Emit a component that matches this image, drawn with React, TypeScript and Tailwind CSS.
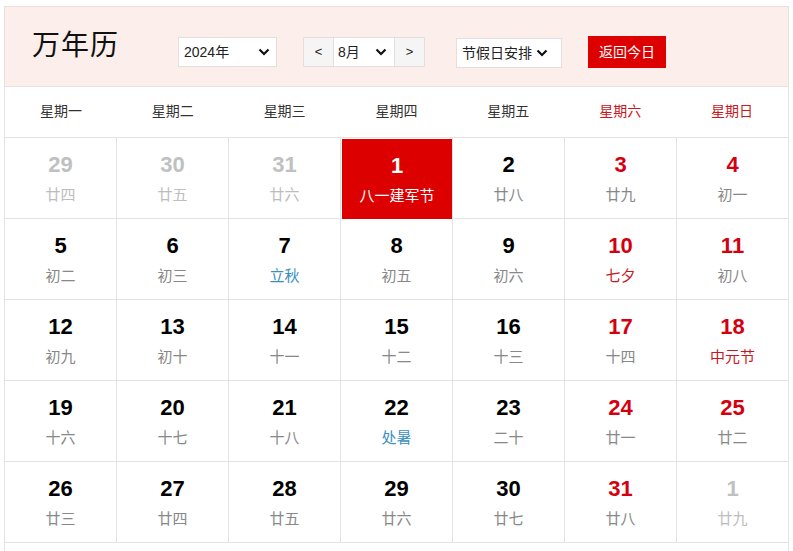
import React from 'react';

type Day = {
  n: number;
  lunar: string;
  muted?: boolean;
  weekend?: boolean;
  today?: boolean;
  term?: boolean;
  fest?: boolean;
};

const weekdays = ['星期一', '星期二', '星期三', '星期四', '星期五', '星期六', '星期日'];

const days: Day[] = [
  { n: 29, lunar: '廿四', muted: true },
  { n: 30, lunar: '廿五', muted: true },
  { n: 31, lunar: '廿六', muted: true },
  { n: 1, lunar: '八一建军节', today: true },
  { n: 2, lunar: '廿八' },
  { n: 3, lunar: '廿九', weekend: true },
  { n: 4, lunar: '初一', weekend: true },
  { n: 5, lunar: '初二' },
  { n: 6, lunar: '初三' },
  { n: 7, lunar: '立秋', term: true },
  { n: 8, lunar: '初五' },
  { n: 9, lunar: '初六' },
  { n: 10, lunar: '七夕', weekend: true, fest: true },
  { n: 11, lunar: '初八', weekend: true },
  { n: 12, lunar: '初九' },
  { n: 13, lunar: '初十' },
  { n: 14, lunar: '十一' },
  { n: 15, lunar: '十二' },
  { n: 16, lunar: '十三' },
  { n: 17, lunar: '十四', weekend: true },
  { n: 18, lunar: '中元节', weekend: true, fest: true },
  { n: 19, lunar: '十六' },
  { n: 20, lunar: '十七' },
  { n: 21, lunar: '十八' },
  { n: 22, lunar: '处暑', term: true },
  { n: 23, lunar: '二十' },
  { n: 24, lunar: '廿一', weekend: true },
  { n: 25, lunar: '廿二', weekend: true },
  { n: 26, lunar: '廿三' },
  { n: 27, lunar: '廿四' },
  { n: 28, lunar: '廿五' },
  { n: 29, lunar: '廿六' },
  { n: 30, lunar: '廿七' },
  { n: 31, lunar: '廿八', weekend: true },
  { n: 1, lunar: '廿九', muted: true },
];

const Chevron = () => (
  <svg width="12" height="8" viewBox="0 0 12 8" className="shrink-0">
    <path d="M1.5 1.5 L6 6 L10.5 1.5" fill="none" stroke="#111" strokeWidth="2.2" />
  </svg>
);

const DayCell = ({ d }: { d: Day }) => {
  let num = 'text-black';
  let sub = 'text-[#888]';
  if (d.muted) {
    num = 'text-[#c0c0c0]';
    sub = 'text-[#bdbdbd]';
  } else if (d.weekend) {
    num = 'text-[#d4000f]';
  }
  if (d.term) sub = 'text-[#3b8fc0]';
  if (d.fest) sub = 'text-[#c9171e]';
  if (d.today) {
    num = 'text-white';
    sub = 'text-white';
  }
  return (
    <div className="h-[81px] border-r border-b border-[#e3e3e3]">
      <div className={`h-full flex flex-col items-center pt-[13px] ${d.today ? 'bg-[#dd0000] mt-[1px] h-[79px] ml-px' : ''}`}>
        <span className={`text-[22px] font-bold leading-[28px] ${num}`}>{d.n}</span>
        <span className={`text-[15px] leading-[20px] mt-[6px] ${sub}`}>{d.lunar}</span>
      </div>
    </div>
  );
};

export default function App() {
  return (
    <div className="pt-[6px] pl-[4px] bg-white min-h-[551px] font-['Liberation_Sans','Noto_Sans_CJK_SC',sans-serif]">
      <div className="w-[785px] border-l border-r border-[#e3e3e3]">
        {/* header bar with pickers */}
        <div className="h-[80px] bg-[#fbeeeb] border-t border-[#efdcd8] flex items-center pl-[27px]">
          <h1 className="text-[28px] leading-none text-[#111] tracking-[1px] w-[118px] pb-[2px]">万年历</h1>
          <div className="flex items-center mt-[11px]">
            <div className="ml-[28px] w-[99px] h-[30px] bg-white border border-[#e6dedd] flex items-center justify-between pl-[5px] pr-[6px] text-[14px] text-[#222]">
              <span>2024年</span>
              <Chevron />
            </div>
            <div className="ml-[26px] h-[30px] flex border border-[#e6dedd] text-[14px] text-[#222]">
              <div className="w-[29px] bg-[#f5f5f5] flex items-center justify-center text-[13px]">&lt;</div>
              <div className="w-[62px] bg-white border-l border-r border-[#e6dedd] flex items-center justify-between pl-[4px] pr-[7px]">
                <span>8月</span>
                <Chevron />
              </div>
              <div className="w-[29px] bg-[#f5f5f5] flex items-center justify-center text-[13px]">&gt;</div>
            </div>
            <div className="ml-[31px] w-[106px] h-[30px] mt-[2px] bg-white border border-[#e6dedd] flex items-center gap-[4px] pl-[5px] text-[14px] text-[#222]">
              <span>节假日安排</span>
              <Chevron />
            </div>
            <button className="ml-[26px] w-[78px] h-[32px] bg-[#dd0000] text-white text-[14px] flex items-center justify-center">
              返回今日
            </button>
          </div>
        </div>

        {/* weekday row */}
        <div className="grid grid-cols-7 border-t border-b border-[#e3e3e3] h-[52px]">
          {weekdays.map((w, i) => (
            <div
              key={w}
              className={`flex items-center justify-center text-[14px] pb-[2px] ${i >= 5 ? 'text-[#c9171e]' : 'text-[#333]'}`}
            >
              {w}
            </div>
          ))}
        </div>

        {/* month grid */}
        <div className="grid grid-cols-[repeat(7,112px)] -mr-px">
          {days.map((d, i) => (
            <DayCell key={i} d={d} />
          ))}
        </div>
        <div className="h-[12px]" />
      </div>
    </div>
  );
}
